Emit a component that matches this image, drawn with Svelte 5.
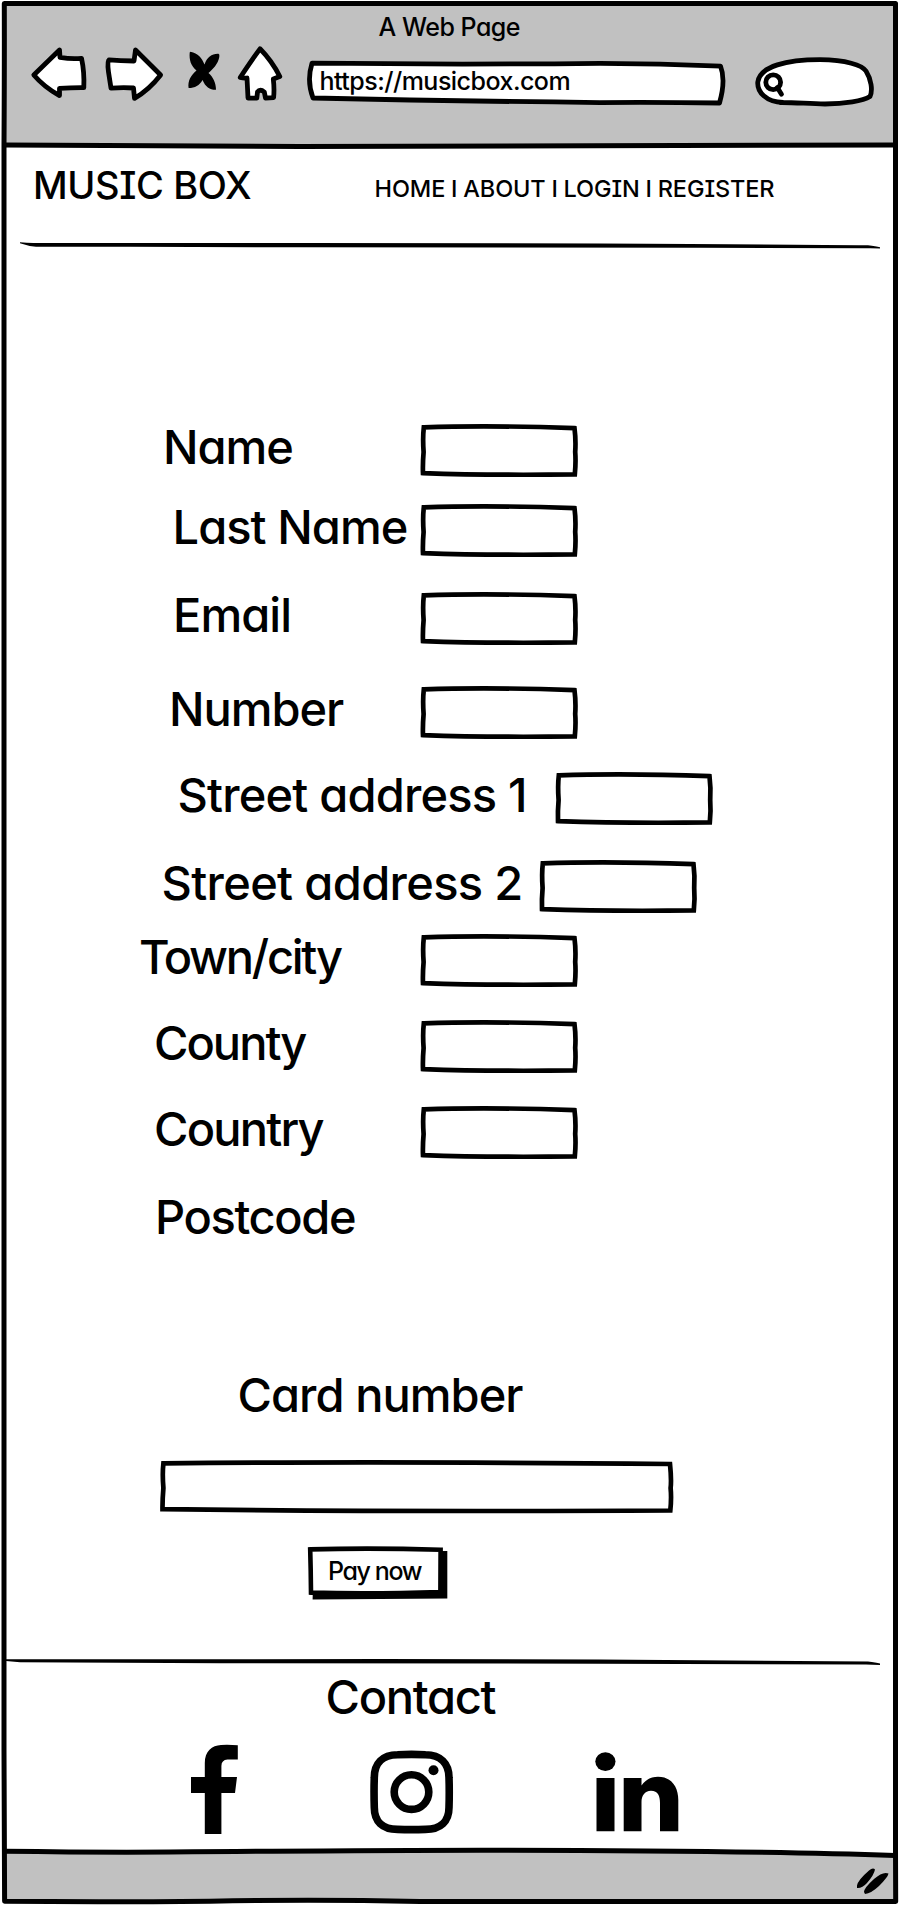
<script>
  // indent: label start, end: right edge of the field, pitch: distance to the next row, track: letter spacing
  const fields = [
    { label: 'Name', indent: 163, end: 577.5, pitch: 80, track: -1, input: true },
    { label: 'Last Name', indent: 172.5, end: 577.5, pitch: 88, track: -0.95, input: true },
    { label: 'Email', indent: 173, end: 577.5, pitch: 94, track: -0.95, input: true },
    { label: 'Number', indent: 169, end: 577.5, pitch: 86, track: -1.05, input: true },
    { label: 'Street address 1', indent: 177.5, end: 713, pitch: 88, track: -0.8, input: true },
    { label: 'Street address 2', indent: 161.5, end: 697, pitch: 74, track: -0.65, input: true },
    { label: 'Town/city', indent: 139, end: 577.5, pitch: 86, track: -2.27, input: true },
    { label: 'County', indent: 154, end: 577.5, pitch: 86, track: -2, input: true },
    { label: 'Country', indent: 154, end: 577.5, pitch: 88, track: -1.8, input: true },
    { label: 'Postcode', indent: 155, end: 577.5, pitch: 54, track: -1.38, input: false }
  ];
</script>

<div class="window">
  <header class="chrome">
    <div class="title">A Web Page</div>
    <div class="tools">
      <svg class="back" width="58" height="58" viewBox="30 47 58 58">
        <path class="shape" d="M33.8 75L59.5 50L60 57.3Q72 59.5 81.5 58.3Q84.5 72 83.8 87.6Q72 87.5 59.5 88.3L59.5 95.6Q44 87 33.8 75Z" />
      </svg>
      <svg class="forward" width="60" height="58" viewBox="105 47 60 58">
        <path class="shape" d="M160.6 75L135.5 50L134 61Q120 60.5 109 59.8Q107 61 108.5 72L111 88.2Q123 87 133.5 88L134.5 98.3Q149 90 160.6 75Z" />
      </svg>
      <svg class="stop" width="36" height="58" viewBox="186 47 36 58">
        <path d="M190.500 51.700C198 53 202 58 204.500 64.500C207 57 212 53.500 218.500 53.800Q219.800 54 219.300 57C218 64 213 69 208.500 73C213 77 216 83 216 89.800C210 90 205.500 87 202.500 80C199.500 85.500 195 88 188.600 88C187.500 81 191 75 196.500 70.500C191 66 189 60 189.700 52.500Z" />
      </svg>
      <svg class="home" width="48" height="58" viewBox="236 47 48 58">
        <path class="shape" d="M260 48.800Q272 61 279.800 76.500L273.300 79Q274.500 89 273.600 97.600L265.500 98L264.300 92Q260 88.500 257.500 92L256.800 98.200L248 98L247 78Q244 78.500 240.200 77.500Q251 61 260 48.800Z" />
      </svg>
      <div class="address">
        <svg width="422" height="58" viewBox="306 47 422 58">
          <path class="shape" d="M312 63.200Q460 64.800 600 63.300Q660 63.500 720.500 66.200Q726 80 719.500 103Q660 102.200 600 102.600Q450 101 313 98Q306.500 81 312 63.200Z" />
        </svg>
        <span>https://musicbox.com</span>
      </div>
      <svg class="search" width="122" height="58" viewBox="754 47 122 58">
        <path class="shape" d="M783 102.500C766 102 757 92 757.800 82C760 66 787 59.800 820 59.700C846 60 862 65 866 71C871 79 873 90 870 96.500C863 101 845 104 825 104C808 103.800 795 102.300 780 102.500" />
        <circle class="shape" cx="773.200" cy="82.200" r="7.400" />
        <path class="shape" d="M777.300 87.500L781.500 94.200" />
      </svg>
    </div>
  </header>

  <nav class="site">
    <div class="brand">MUSIC BOX</div>
    <div class="links">
      <span>HOME</span><i>I</i><span>ABOUT</span><i>I</i><span>LOGIN</span><i>I</i><span>REGISTER</span>
    </div>
  </nav>

  <svg class="rule" width="900" height="12" viewBox="0 240 900 12">
    <path d="M20 242.200Q28 243.200 36 243H300L600 243.500Q800 244.500 868 245.200Q876 246 880 247.300V248.600Q872 248 866 248.300L700 247.800L300 247.300L130 246.700H36Q28 246 20 243.200Z" />
  </svg>

  <form class="checkout">
    {#each fields as f}
      <div class="row" style="padding-left:{f.indent}px;width:{f.end}px;height:{f.pitch}px">
        <span class="label" style="letter-spacing:{f.track}px">{f.label}</span>
        {#if f.input}
          <svg class="field" width="158" height="54" viewBox="0 0 158 54">
            <path class="box" d="M3.800 3.400Q70 1 154.500 4.200Q156 16 155.200 28Q156 38 154.800 50.400Q70 51.500 3 49.100Q2.600 40 3.600 28Q2.600 14 3.800 3.400Z" />
          </svg>
        {/if}
      </div>
    {/each}
  </form>

  <section class="payment">
    <h2 class="label">Card number</h2>
    <svg class="card" width="515" height="54" viewBox="0 0 515 54">
      <path class="box" d="M3.400 3.400Q220 1.200 510 4Q511.600 20 510.600 28Q511.600 38 510.300 50.500Q220 52 2.500 49.200Q2.400 40 3.400 28Q2.200 14 3.400 3.400Z" />
    </svg>
    <button type="button">
      <svg width="142" height="56" viewBox="307 1545 142 56">
        <path d="M314 1552L447.300 1551V1598.600L312.600 1599.600Z" />
        <path class="face" d="M310.200 1549.400Q370 1547.800 440.600 1549.700L440.400 1592Q370 1594.300 311 1592.600Q310.800 1570 310.200 1549.400Z" />
      </svg>
      <span>Pay now</span>
    </button>
  </section>

  <svg class="rule" width="900" height="12" viewBox="0 1656 900 12">
    <path d="M6 1659.200L90 1659.300L380 1659L600 1659.600L868 1661.500Q876 1662.500 880 1663.500V1665Q872 1664.500 866 1664.500L600 1663.700L220 1663.300L20 1662.300L6 1661Z" />
  </svg>

  <footer class="contact">
    <h2 class="label">Contact</h2>
    <div class="social">
      <svg width="48" height="90" viewBox="190 1744 48 90">
        <path d="M191 1777H204.800V1763C204.800 1751 212 1745.300 221 1744.900Q229 1744.500 237.800 1745.200V1759.500H227.500Q221.400 1760 221.400 1766V1777H237L235 1793H221.400V1834H204.800V1793H191Z" />
      </svg>
      <svg width="84" height="84" viewBox="369.500 1750.500 84 84">
        <path class="lens" d="M397 1755.200Q411 1754.600 425 1755.200C440 1755.200 448.500 1764 448.500 1778Q449 1792 448.500 1808C448.500 1822 440 1829.900 425 1829.900Q411 1830.300 397 1829.900C382 1829.900 373.800 1822 373.800 1808Q373.300 1792 373.800 1778C373.800 1764 382 1755.200 397 1755.200Z" />
        <circle class="lens" cx="411" cy="1792.600" r="17.300" />
        <circle cx="433" cy="1770.700" r="5" />
      </svg>
      <svg width="84" height="80" viewBox="595.500 1752 84 80">
        <ellipse cx="605.900" cy="1761.600" rx="10.100" ry="9.400" />
        <path d="M597 1778H615V1831.200H597ZM624.200 1778H642V1785.500C646 1779.500 652 1776.700 658.500 1776.700C672 1776.700 678.800 1787 678.800 1800V1831.200H660.500V1803C660.500 1796 658.500 1790.700 651.500 1790.700C645 1790.700 642 1796 642 1802V1831.200H624.200Z" />
      </svg>
    </div>
  </footer>

  <div class="status">
    <svg width="32" height="26" viewBox="856 1868 32 26">
      <path d="M875 1869.500Q873 1867 869 1870.500Q858 1880 857 1885.500V1888Q862 1888.500 867 1883Q874 1875 875 1869.500ZM888.500 1873.500Q883 1871 874 1879Q864 1888 864 1892L865 1894Q871 1893.500 879 1886Q888 1877 888.500 1873.500Z" />
    </svg>
  </div>

  <svg class="frame" width="900" height="1906" viewBox="0 0 900 1906">
    <path class="fill" d="M5 3.500H895V145Q600 147 300 146.500L5 145.300ZM5 1851.300Q100 1852.500 170 1852Q400 1850 500 1850.200Q750 1850.500 895 1855.500V1901.500H5Z" />
    <path class="line" d="M4.300 3.500H895.500Q896 400 895.500 900Q895.700 1500 895.500 1850L895.700 1901.500Q600 1901.800 420 1901.400Q310 1899 210 1901.200Q100 1902.200 4.600 1901.300L4 1750V1000Q3.500 500 4 145Q4.500 60 4.300 3.500Z" />
    <path class="line" d="M4 145.100Q130 146.200 300 146.400Q600 147 895 145" />
    <path class="line" d="M4 1851.300Q100 1852.500 170 1852Q400 1850 500 1850.200Q750 1850.500 895 1855.500" />
  </svg>
</div>

<style>
  :global(body) { background: #fff; }
  .window {
    position: relative;
    isolation: isolate;
    display: flex;
    flex-direction: column;
    width: 900px;
    height: 1906px;
    overflow: hidden;
    color: #000;
    font-family: Inter, "Liberation Sans", sans-serif;
    font-weight: 500;
    font-feature-settings: "cv11";
    line-height: 1;
  }
  svg { display: block; flex: none; overflow: visible; }
  .shape, .box, .face { fill: #fff; stroke: #000; stroke-width: 4.8; stroke-linejoin: round; stroke-linecap: round; }
  .box { stroke-width: 4.7; stroke-linejoin: miter; }
  .face { stroke-width: 4.6; stroke-linejoin: miter; }
  .lens { fill: none; stroke: #000; stroke-width: 7.6; }

  .frame { position: absolute; inset: 0; z-index: -1; }
  .frame .fill { fill: #c1c1c1; }
  .frame .line { fill: none; stroke: #000; stroke-width: 5; stroke-linejoin: round; }

  .chrome { height: 146px; padding-top: 15px; box-sizing: border-box; }
  .title { margin-left: 378.5px; font-size: 25px; letter-spacing: -0.5px; white-space: nowrap; }
  .tools { display: flex; margin-top: 7px; padding-left: 30px; }
  .forward { margin-left: 17px; }
  .stop { margin-left: 21px; }
  .home { margin-left: 14px; }
  .address { display: grid; margin-left: 22px; }
  .address > * { grid-area: 1 / 1; }
  .address span { padding: 22px 0 0 13.5px; font-size: 25px; letter-spacing: -0.52px; }
  .search { margin-left: 26px; }

  .site { display: flex; align-items: flex-start; height: 94px; padding-left: 33px; }
  .brand { width: 341.5px; padding-top: 20px; font-size: 38px; letter-spacing: -0.4px; font-feature-settings: "cv08"; white-space: nowrap; }
  .links { display: flex; padding-top: 31px; font-size: 23.5px; letter-spacing: -0.1px; font-feature-settings: "cv08"; }
  .links i { width: 18px; text-align: center; font-style: normal; font-feature-settings: normal; }

  .checkout { margin-top: 172px; }
  .row { display: flex; align-items: flex-start; justify-content: space-between; box-sizing: border-box; }
  .label { margin: -1.4px 0 0; font-size: 47px; font-weight: 500; white-space: nowrap; }

  .payment { display: flex; flex-direction: column; align-items: flex-start; height: 408px; padding-top: 124px; box-sizing: border-box; }
  .payment .label { margin-left: 237.5px; letter-spacing: -0.95px; }
  .card { margin: 42.4px 0 0 160px; }
  button { display: grid; margin: 31px 0 0 307px; padding: 0; border: 0; background: none; color: inherit; font: inherit; }
  button > * { grid-area: 1 / 1; }
  button span { padding: 13.6px 0 0 21px; text-align: left; font-size: 25px; letter-spacing: -1.4px; }

  .contact { height: 183px; padding-top: 6px; box-sizing: border-box; }
  .contact .label { margin-left: 325.5px; letter-spacing: -1.3px; }
  .social { display: flex; align-items: flex-end; margin-top: 24px; padding-left: 190px; }
  .social svg + svg { margin-left: 131.5px; }
  .social svg:last-child { margin: 0 0 2px 141px; }

  .status { display: flex; flex: 1; justify-content: flex-end; padding: 17px 12px 0 0; }
</style>
